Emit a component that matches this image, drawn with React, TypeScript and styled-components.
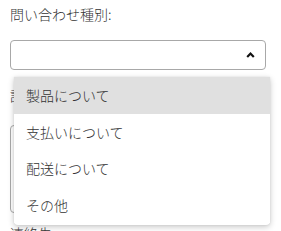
import styled, { createGlobalStyle } from "styled-components";

const GlobalStyle = createGlobalStyle`
  body {
    margin: 0;
    background: #fff;
    font-family: "Noto Sans CJK JP", "Noto Sans", sans-serif;
    color: #333;
  }
`;

const Form = styled.div`
  padding: 4px 10px;
  display: flex;
  flex-direction: column;
`;

const Label = styled.div<{ $gap: number }>`
  font-size: 14px;
  line-height: 20px;
  font-weight: 300;
  color: #333;
  margin-bottom: ${(p) => p.$gap}px;
`;

const SelectWrap = styled.div`
  position: relative;
  width: 256px;
  margin-bottom: 15px;
`;

const SelectBox = styled.div`
  height: 30px;
  box-sizing: border-box;
  border: 1px solid #a8a8a8;
  border-radius: 4px;
  background: #fff;
  display: flex;
  align-items: center;
  justify-content: flex-end;
  padding-right: 10px;
`;

const Menu = styled.ul`
  position: absolute;
  top: 37px;
  left: 4px;
  width: 256px;
  margin: 0;
  padding: 0 0 2px;
  list-style: none;
  background: #fff;
  border-radius: 0 0 4px 4px;
  box-shadow: 0 2px 6px rgba(0, 0, 0, 0.22), 0 0 2px rgba(0, 0, 0, 0.1);
  z-index: 2;
`;

const Item = styled.li<{ $active?: boolean }>`
  height: 36.5px;
  display: flex;
  align-items: center;
  padding-left: 12px;
  font-size: 14px;
  font-weight: 300;
  color: #333;
  background: ${(p) => (p.$active ? "#e0e0e0" : "#fff")};
`;

const TextArea = styled.div`
  width: 256px;
  height: 88px;
  box-sizing: border-box;
  border: 1px solid #a8a8a8;
  border-radius: 4px;
  margin-bottom: 10px;
`;

const options = ["製品について", "支払いについて", "配送について", "その他"];

export default function App() {
  return (
    <>
      <GlobalStyle />
      <Form>
        <Label $gap={16}>問い合わせ種別:</Label>
        <SelectWrap>
          <SelectBox>
            <svg width="9" height="6" viewBox="0 0 9 6">
              <polyline
                points="1.2,5 4.5,1.6 7.8,5"
                fill="none"
                stroke="#111"
                strokeWidth="2.2"
              />
            </svg>
          </SelectBox>
          <Menu>
            {options.map((o, i) => (
              <Item key={o} $active={i === 0}>
                {o}
              </Item>
            ))}
          </Menu>
        </SelectWrap>
        <Label $gap={20}>詳細:</Label>
        <TextArea />
        <Label $gap={0}>連絡先:</Label>
      </Form>
    </>
  );
}
